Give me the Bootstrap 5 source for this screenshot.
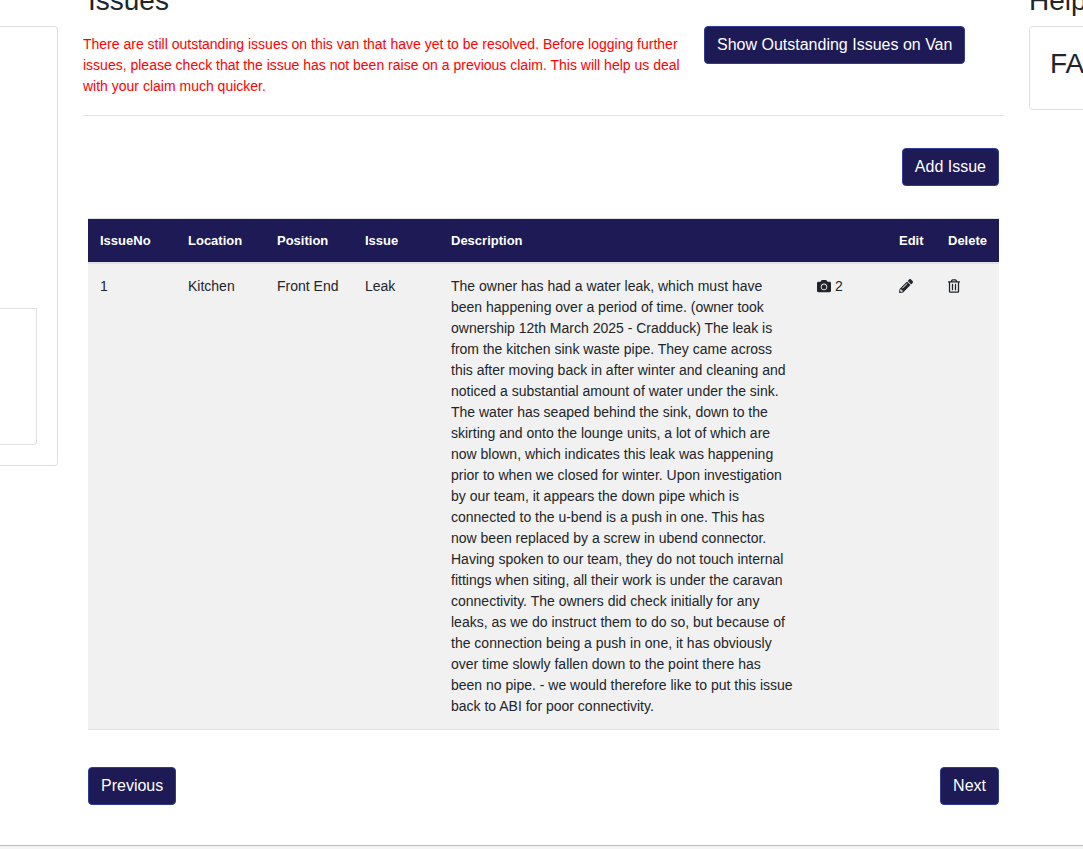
<!DOCTYPE html>
<html lang="en">
<head>
<meta charset="utf-8">
<meta name="viewport" content="width=device-width, initial-scale=1">
<title>Issues</title>
<link href="https://cdn.jsdelivr.net/npm/bootstrap@5.3.0/dist/css/bootstrap.min.css" rel="stylesheet">
<script src="https://cdn.jsdelivr.net/npm/bootstrap@5.3.0/dist/js/bootstrap.bundle.min.js" defer></script>
<style>
  body { font-family: "Liberation Sans", Arial, sans-serif; color: #212529; overflow: hidden; }
  h2 { font-size: 28px; line-height: 34px; font-weight: 400; margin: 0 0 8px; }
  .page-row { gap: 25px; margin-top: -16px; }
  .side-left { width: 58px; padding-top: 42px; }
  .side-right { width: 54px; overflow: hidden; }
  .panel { border: 1px solid #dfdfdf; border-radius: 4px; }
  .panel-left { height: 440px; border-left: 0; border-radius: 0 4px 4px 0; padding: 281px 20px 20px 0; }
  .panel-inner { height: 137px; border: 1px solid #dfdfdf; border-left: 0; border-radius: 0 0 4px 0; }
  .panel-help { width: 240px; height: 84px; padding: 20px; }
  .notice { border-bottom: 1px solid #e3e3e3; padding-bottom: 18px; gap: 20px; }
  .notice p { flex: 0 1 601px; margin: 8px 0 0; font-size: 14px; line-height: 21px; color: #f00; }
  .btn-navy { --bs-btn-color: #fff; --bs-btn-bg: #1d1a56; --bs-btn-border-color: #303c94; --bs-btn-hover-color: #fff; --bs-btn-hover-bg: #2b2778; --bs-btn-hover-border-color: #303c94; --bs-btn-border-radius: 4px; white-space: nowrap; }
  .inset { padding: 0 5px; }
  .toolbar { padding-top: 32px; }
  .issues { table-layout: fixed; font-size: 14px; line-height: 21px; margin: 32px 0 37px; border-top: 1px solid #dee2e6; border-collapse: separate; border-spacing: 0; }
  .issues > thead > tr > th { background: #1d1a56; color: #fff; font-size: 13px; line-height: 19px; padding: 12px; border-bottom: 2px solid #dee2e6; box-shadow: none; }
  .issues > tbody > tr > td { background: #f1f1f1; color: #212529; padding: 12px; border-bottom: 1px solid #dee2e6; box-shadow: none; }
  .col-number, .col-position { width: 88px; }
  .col-location { width: 89px; }
  .col-issue { width: 86px; }
  .col-photos { width: 82px; }
  .col-edit { width: 49px; }
  .col-delete { width: 63px; }
  .icon-button { border: 0; background: none; padding: 0; color: inherit; line-height: 21px; }
  .icon-button svg { display: inline-block; vertical-align: -2px; }
  .foot { margin-top: 40px; height: 24px; border-top: 1px solid #bbb; background: #f5f5f5; }
</style>
</head>
<body>
<div class="page-row d-flex">
  <aside class="side-left flex-shrink-0">
    <div class="panel panel-left"><div class="panel-inner"></div></div>
  </aside>

  <main class="flex-grow-1">
    <h2 class="inset">Issues</h2>
    <div class="notice d-flex align-items-start">
      <p>There are still outstanding issues on this van that have yet to be resolved. Before logging further issues, please check that the issue has not been raise on a previous claim. This will help us deal with your claim much quicker.</p>
      <button type="button" class="btn btn-navy">Show Outstanding Issues on Van</button>
    </div>

    <div class="inset">
      <div class="toolbar d-flex justify-content-end">
        <button type="button" class="btn btn-navy">Add Issue</button>
      </div>
      <table class="table issues">
        <colgroup>
          <col class="col-number"><col class="col-location"><col class="col-position"><col class="col-issue"><col><col class="col-photos"><col class="col-edit"><col class="col-delete">
        </colgroup>
        <thead>
          <tr><th>IssueNo</th><th>Location</th><th>Position</th><th>Issue</th><th>Description</th><th></th><th>Edit</th><th>Delete</th></tr>
        </thead>
        <tbody>
          <tr>
            <td>1</td>
            <td>Kitchen</td>
            <td>Front End</td>
            <td>Leak</td>
            <td>The owner has had a water leak, which must have been happening over a period of time. (owner took ownership 12th March 2025 - Cradduck) The leak is from the kitchen sink waste pipe. They came across this after moving back in after winter and cleaning and noticed a substantial amount of water under the sink. The water has seaped behind the sink, down to the skirting and onto the lounge units, a lot of which are now blown, which indicates this leak was happening prior to when we closed for winter. Upon investigation by our team, it appears the down pipe which is connected to the u-bend is a push in one. This has now been replaced by a screw in ubend connector. Having spoken to our team, they do not touch internal fittings when siting, all their work is under the caravan connectivity. The owners did check initially for any leaks, as we do instruct them to do so, but because of the connection being a push in one, it has obviously over time slowly fallen down to the point there has been no pipe. - we would therefore like to put this issue back to ABI for poor connectivity.</td>
            <td>
              <button type="button" class="icon-button" aria-label="Photos: 2"><svg width="14" height="14" viewBox="0 0 512 512" fill="currentColor" aria-hidden="true"><path d="M512 144v288c0 26.500-21.500 48-48 48H48c-26.500 0-48-21.500-48-48V144c0-26.500 21.500-48 48-48h88l12.300-32.900c7-18.700 24.900-31.100 44.900-31.100h125.500c20 0 37.900 12.400 44.900 31.100L376 96h88c26.500 0 48 21.500 48 48zM376 288c0-66.200-53.800-120-120-120s-120 53.800-120 120 53.800 120 120 120 120-53.800 120-120zm-32 0c0 48.500-39.500 88-88 88s-88-39.500-88-88 39.500-88 88-88 88 39.500 88 88z"/></svg> 2</button>
            </td>
            <td>
              <button type="button" class="icon-button" aria-label="Edit"><svg width="14" height="14" viewBox="0 0 512 512" fill="currentColor" aria-hidden="true"><path d="M497.900 142.100l-46.100 46.100c-4.700 4.700-12.300 4.700-17 0l-111-111c-4.700-4.700-4.700-12.300 0-17l46.100-46.100c18.700-18.700 49.100-18.700 67.900 0l60.100 60.100c18.800 18.700 18.800 49.100 0 67.900zM284.200 99.800L21.600 362.400.4 483.900c-2.900 16.400 11.400 30.600 27.800 27.800l121.500-21.300 262.600-262.600c4.700-4.700 4.700-12.300 0-17l-111-111c-4.800-4.700-12.400-4.700-17.100 0zM124.100 339.900c-5.500-5.500-5.500-14.300 0-19.800l154-154c5.500-5.500 14.300-5.500 19.800 0s5.500 14.300 0 19.800l-154 154c-5.500 5.500-14.300 5.500-19.800 0zM88 424h48v36.300l-64.500 11.300-31.100-31.100L51.700 376H88v48z"/></svg></button>
            </td>
            <td>
              <button type="button" class="icon-button" aria-label="Delete"><svg width="12" height="14" viewBox="0 0 448 512" fill="currentColor" aria-hidden="true"><path d="M268 416h24a12 12 0 0 0 12-12V188a12 12 0 0 0-12-12h-24a12 12 0 0 0-12 12v216a12 12 0 0 0 12 12zM432 80h-82.400l-34-56.700A48 48 0 0 0 274.400 0H173.600a48 48 0 0 0-41.200 23.300L98.400 80H16A16 16 0 0 0 0 96v16a16 16 0 0 0 16 16h16v336a48 48 0 0 0 48 48h288a48 48 0 0 0 48-48V128h16a16 16 0 0 0 16-16V96a16 16 0 0 0-16-16zM171.800 50.900A6 6 0 0 1 177 48h94a6 6 0 0 1 5.200 2.900L293.600 80H154.400zM368 464H80V128h288zM156 416h24a12 12 0 0 0 12-12V188a12 12 0 0 0-12-12h-24a12 12 0 0 0-12 12v216a12 12 0 0 0 12 12z"/></svg></button>
            </td>
          </tr>
        </tbody>
      </table>
      <div class="d-flex justify-content-between">
        <button type="button" class="btn btn-navy">Previous</button>
        <button type="button" class="btn btn-navy">Next</button>
      </div>
    </div>
  </main>

  <aside class="side-right flex-shrink-0">
    <h2>Help</h2>
    <div class="panel panel-help"><h2>FA</h2></div>
  </aside>
</div>
<footer class="foot"></footer>
</body>
</html>
